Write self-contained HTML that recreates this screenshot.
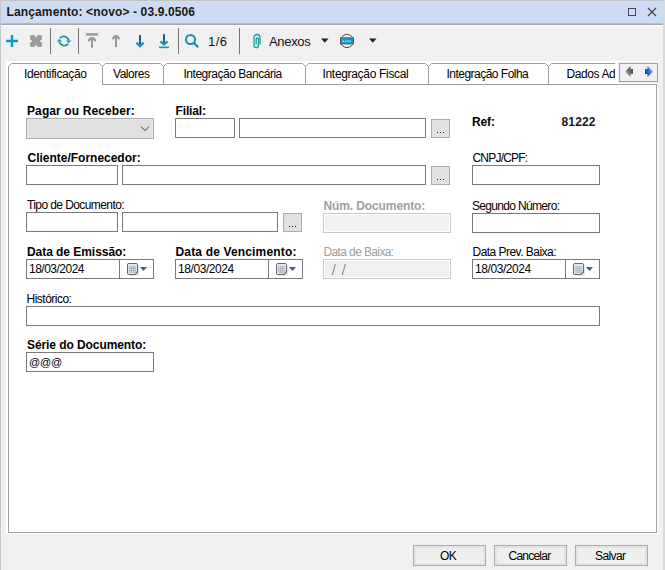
<!DOCTYPE html>
<html><head><meta charset="utf-8">
<style>
*{margin:0;padding:0;box-sizing:border-box}
html,body{width:665px;height:570px;overflow:hidden;background:#f0f0f0;font-family:"Liberation Sans",sans-serif;color:#000}
.a{position:absolute}
.t{position:absolute;white-space:nowrap;font-size:12px;line-height:14px}
.in{position:absolute;background:#fff;border:1px solid #7a7a7a;height:20px}
.dis{position:absolute;background:#f0f0f0;border:1px solid #c8c8c8;box-shadow:inset 0 0 0 1px #ffffff;height:20px}
.dots{position:absolute;background:#e1e1e1;border:1px solid #adadad;width:19px;height:19px}
.dots i{position:absolute;width:1px;height:1px;background:#222;top:12px}
.sep{position:absolute;top:28px;width:1px;height:26px;background:#757575}
.btn{position:absolute;top:545px;width:73px;height:21px;border:1px solid #adadad;background:#efefef;box-shadow:inset 0 0 0 2px #e3e3e3}
.dv{position:absolute;top:260px;width:1px;height:18px;background:#7a7a7a}
</style></head><body>
<!-- window frame -->
<div class="a" style="left:0;top:0;width:665px;height:1px;background:#c4c4c4"></div>
<div class="a" style="left:0;top:0;width:1px;height:570px;background:#c4c4c4"></div>
<div class="a" style="left:663px;top:0;width:2px;height:570px;background:#d9d9d9"></div>
<!-- title bar -->
<div class="a" style="left:1px;top:1px;width:662px;height:22px;background:#cddcf3"></div>
<div class="a" style="left:1px;top:23px;width:662px;height:1px;background:#b9b9b9"></div>
<div class="a" style="left:1px;top:24px;width:662px;height:1px;background:#a6a6a6"></div>
<div class="a" style="left:1px;top:25px;width:662px;height:1px;background:#ffffff"></div>
<div class="a" style="left:628px;top:8px;width:8px;height:8px;border:1px solid #4a4a4a"></div>
<svg class="a" style="left:646px;top:6px" width="12" height="12"><path d="M2 2L10 10M10 2L2 10" stroke="#444" stroke-width="1.2"/></svg>

<!-- toolbar -->
<svg class="a" style="left:0;top:26px" width="400" height="30">
 <path d="M6 15H18M12 9V21" stroke="#1193cf" stroke-width="2.4"/>
 <path d="M31 9H34L36 11.2L38 9H41L42 10V13L39.8 15L42 17V20L41 21H38L36 18.8L34 21H31L30 20V17L32.2 15L30 13V10Z" fill="#9c9c9c"/>
 <g fill="none" stroke="#1a9a9e" stroke-width="1.8">
  <path d="M59.8 12.2A5.2 5.2 0 0 1 68.8 14.6"/>
  <path d="M68.2 17.9A5.2 5.2 0 0 1 59.2 15.4"/>
 </g>
 <path d="M65.9 13.9L68.7 17.2L71.5 13.9L68.7 15.1Z" fill="#1a8cc8"/>
 <path d="M56.5 16.1L59.3 12.8L62.1 16.1L59.3 14.9Z" fill="#1a8cc8"/>
 <g fill="#9a9a9a">
  <rect x="86" y="7.2" width="12" height="2.4"/>
  <path d="M88 15.6V13.6L90.6 11H93.4L96 13.6V15.6H94.6L93 14V21.8H91V14L89.4 15.6Z"/>
  <path d="M112.2 13.6V11.6L114.8 9H117.2L119.8 11.6V13.6H118.4L117 12.2V21H115V12.2L113.6 13.6Z"/>
 </g>
 <rect x="139" y="9" width="2" height="11" fill="#1f5a9e"/>
 <path d="M136.4 16.6L140 20.2L143.6 16.6" fill="none" stroke="#1a8ec8" stroke-width="2.2"/>
 <rect x="163" y="8.2" width="2" height="10" fill="#1f5a9e"/>
 <path d="M160.4 15.4L164 18.6L167.6 15.4" fill="none" stroke="#1a9a9e" stroke-width="2.2"/>
 <rect x="159" y="20.6" width="10" height="1.6" fill="#1a9a9e"/>
 <circle cx="190.5" cy="13.5" r="4.5" fill="none" stroke="#1a8cb0" stroke-width="2"/>
 <path d="M194 17L198.2 21.2" stroke="#1a8cb0" stroke-width="2.2"/>
 <path d="M260 18.5V11.5A3 3 0 0 0 254 11.5V19.5A2.2 2.2 0 0 0 258.4 19.5V13A1.1 1.1 0 0 0 256.2 13V18.5" fill="none" stroke="#1f9a9a" stroke-width="1.3"/>
 <path d="M321 12.6H328.6L324.8 16.8Z" fill="#222"/>
 <path d="M369 12.6H376.6L372.8 16.8Z" fill="#222"/>
 <circle cx="347" cy="15" r="6.6" fill="#f4f4f4" stroke="#4a4a4a" stroke-width="1"/>
 <rect x="340.6" y="11.8" width="12.8" height="6.2" fill="#1a96d4" stroke="#5a4a40" stroke-width="0.8"/>
 <path d="M342.5 15.2H351.5" stroke="#e8f6ff" stroke-width="1" stroke-dasharray="1.5 0.8"/>
</svg>
<div class="sep" style="left:50px"></div>
<div class="sep" style="left:78px"></div>
<div class="sep" style="left:178px"></div>
<div class="sep" style="left:239px"></div>

<!-- tab control -->
<div class="a" style="left:6px;top:61px;width:652px;height:473px;background:#fff"></div>
<div class="a" style="left:8px;top:84px;width:649px;height:449px;border:1px solid #a0a0a0;border-top:none"></div>
<svg class="a" style="left:0;top:55px" width="665" height="35">
 <g fill="none" stroke="#a0a0a0" stroke-width="1">
 <path d="M8.5 35V11.5L11.5 8.5H99.5L102.5 11.5L105.5 8.5H160.5L163.5 11.5L166.5 8.5H302.5L305.5 11.5L308.5 8.5H425.5L428.5 11.5L431.5 8.5H545.5L548.5 11.5L551.5 8.5H615"/>
 <path d="M102.5 11.5V29.5M163.5 11.5V29.5M305.5 11.5V29.5M428.5 11.5V29.5M548.5 11.5V29.5"/>
 <path d="M102 29.5H657"/>
 </g>
</svg>
<div class="a" style="left:549px;top:64px;width:66px;height:20px;overflow:hidden"><div class="t" style="left:17.5px;top:3px;letter-spacing:-0.4px">Dados Adicionais</div></div>
<div class="a" style="left:618px;top:62px;width:40px;height:21px;background:#f0f0f0"></div>
<div class="a" style="left:619px;top:63px;width:39px;height:19px;border:1px solid #a0a0a0;background:#f0f0f0"></div>
<svg class="a" style="left:619px;top:63px" width="39" height="19">
 <defs>
  <linearGradient id="gg" x1="1" y1="0.2" x2="0" y2="0.8"><stop offset="0" stop-color="#4a4a4a"/><stop offset="0.5" stop-color="#6e6e6e"/><stop offset="1" stop-color="#c8c8c8"/></linearGradient>
  <linearGradient id="bg" x1="0" y1="0.8" x2="1" y2="0.2"><stop offset="0" stop-color="#0a30d0"/><stop offset="0.5" stop-color="#2a6af0"/><stop offset="1" stop-color="#a8ccff"/></linearGradient>
 </defs>
 <path d="M6 8.5L11.5 3V6H14V11H11.5V14Z" fill="url(#gg)"/>
 <path d="M34 8.5L28.5 3V6H26V11H28.5V14Z" fill="url(#bg)"/>
</svg>

<!-- form -->
<div class="a" style="left:26px;top:118px;width:128px;height:21px;background:#e1e1e1;border:1px solid #adadad;box-shadow:inset 0 0 0 1px #e6e6e6"></div>
<svg class="a" style="left:140px;top:125px" width="10" height="7"><path d="M1 1.5L5 5.5L9 1.5" fill="none" stroke="#333" stroke-width="1"/></svg>

<div class="in" style="left:175px;top:118px;width:60px"></div>
<div class="in" style="left:239px;top:118px;width:187px"></div>
<div class="dots" style="left:431px;top:119px"><i style="left:5px"></i><i style="left:8px"></i><i style="left:11px"></i></div>

<div class="in" style="left:26px;top:165px;width:92px"></div>
<div class="in" style="left:122px;top:165px;width:304px"></div>
<div class="dots" style="left:431px;top:166px"><i style="left:5px"></i><i style="left:8px"></i><i style="left:11px"></i></div>
<div class="in" style="left:472px;top:165px;width:128px"></div>

<div class="in" style="left:26px;top:212px;width:92px"></div>
<div class="in" style="left:122px;top:212px;width:156px"></div>
<div class="dots" style="left:283px;top:213px"><i style="left:5px"></i><i style="left:8px"></i><i style="left:11px"></i></div>
<div class="dis" style="left:323px;top:213px;width:128px"></div>
<div class="in" style="left:472px;top:213px;width:128px"></div>

<div class="in" style="left:26px;top:259px;width:128px"></div>
<div class="in" style="left:175px;top:259px;width:128px"></div>
<div class="dis" style="left:323px;top:259px;width:128px"></div>
<div class="in" style="left:472px;top:259px;width:128px"></div>
<div class="dv" style="left:119px"></div>
<div class="dv" style="left:268px"></div>
<div class="dv" style="left:565px"></div>
<svg class="a" style="left:0;top:255px" width="665" height="30">
 
 <g transform="translate(127,8)">
   <rect x="1.8" y="1.8" width="10" height="11" rx="1" fill="#bdbdbd" opacity="0.45"/>
   <path d="M1.7 0.5H9.3Q10.5 0.5 10.5 1.7V9.2L8.2 11.5H1.7Q0.5 11.5 0.5 10.3V1.7Q0.5 0.5 1.7 0.5Z" fill="#e2e7ee" stroke="#6e625c" stroke-width="1"/>
   <path d="M8.2 11.5V9.2H10.5Z" fill="#c9ced6" stroke="#6e625c" stroke-width="0.8"/>
   <rect x="2" y="3" width="7" height="7" fill="#9ea9b8"/>
   <g fill="#f4f7fb">
    <rect x="2.4" y="3.4" width="1.4" height="1.4"/><rect x="4.8" y="3.4" width="1.4" height="1.4"/><rect x="7.2" y="3.4" width="1.4" height="1.4"/>
    <rect x="2.4" y="5.8" width="1.4" height="1.4"/><rect x="4.8" y="5.8" width="1.4" height="1.4"/><rect x="7.2" y="5.8" width="1.4" height="1.4"/>
    <rect x="2.4" y="8.2" width="1.4" height="1.4"/><rect x="4.8" y="8.2" width="1.4" height="1.4"/><rect x="7.2" y="8.2" width="1.4" height="1.4"/>
   </g>
   <path d="M13 4H20L16.5 8Z" fill="#3d5b8c"/>
  </g>
 <g transform="translate(276,8)">
   <rect x="1.8" y="1.8" width="10" height="11" rx="1" fill="#bdbdbd" opacity="0.45"/>
   <path d="M1.7 0.5H9.3Q10.5 0.5 10.5 1.7V9.2L8.2 11.5H1.7Q0.5 11.5 0.5 10.3V1.7Q0.5 0.5 1.7 0.5Z" fill="#e2e7ee" stroke="#6e625c" stroke-width="1"/>
   <path d="M8.2 11.5V9.2H10.5Z" fill="#c9ced6" stroke="#6e625c" stroke-width="0.8"/>
   <rect x="2" y="3" width="7" height="7" fill="#9ea9b8"/>
   <g fill="#f4f7fb">
    <rect x="2.4" y="3.4" width="1.4" height="1.4"/><rect x="4.8" y="3.4" width="1.4" height="1.4"/><rect x="7.2" y="3.4" width="1.4" height="1.4"/>
    <rect x="2.4" y="5.8" width="1.4" height="1.4"/><rect x="4.8" y="5.8" width="1.4" height="1.4"/><rect x="7.2" y="5.8" width="1.4" height="1.4"/>
    <rect x="2.4" y="8.2" width="1.4" height="1.4"/><rect x="4.8" y="8.2" width="1.4" height="1.4"/><rect x="7.2" y="8.2" width="1.4" height="1.4"/>
   </g>
   <path d="M13 4H20L16.5 8Z" fill="#3d5b8c"/>
  </g>
 <g transform="translate(573,8)">
   <rect x="1.8" y="1.8" width="10" height="11" rx="1" fill="#bdbdbd" opacity="0.45"/>
   <path d="M1.7 0.5H9.3Q10.5 0.5 10.5 1.7V9.2L8.2 11.5H1.7Q0.5 11.5 0.5 10.3V1.7Q0.5 0.5 1.7 0.5Z" fill="#e2e7ee" stroke="#6e625c" stroke-width="1"/>
   <path d="M8.2 11.5V9.2H10.5Z" fill="#c9ced6" stroke="#6e625c" stroke-width="0.8"/>
   <rect x="2" y="3" width="7" height="7" fill="#9ea9b8"/>
   <g fill="#f4f7fb">
    <rect x="2.4" y="3.4" width="1.4" height="1.4"/><rect x="4.8" y="3.4" width="1.4" height="1.4"/><rect x="7.2" y="3.4" width="1.4" height="1.4"/>
    <rect x="2.4" y="5.8" width="1.4" height="1.4"/><rect x="4.8" y="5.8" width="1.4" height="1.4"/><rect x="7.2" y="5.8" width="1.4" height="1.4"/>
    <rect x="2.4" y="8.2" width="1.4" height="1.4"/><rect x="4.8" y="8.2" width="1.4" height="1.4"/><rect x="7.2" y="8.2" width="1.4" height="1.4"/>
   </g>
   <path d="M13 4H20L16.5 8Z" fill="#3d5b8c"/>
  </g>
 <path d="M332.3 20L335.3 9.2M342.3 20L345.3 9.2" stroke="#8a8a8a" stroke-width="1.1"/>
</svg>

<div class="in" style="left:26px;top:306px;width:574px"></div>
<div class="in" style="left:26px;top:352px;width:128px"></div>

<!-- buttons -->
<div class="btn" style="left:413px"></div>
<div class="btn" style="left:494px"></div>
<div class="btn" style="left:575px"></div>
<div class="t" style="left:6.5px;top:5px;font-weight:bold;letter-spacing:0.13px;color:#1a1a1a;">Lançamento: &lt;novo&gt; - 03.9.0506</div>
<div class="t" style="left:208.0px;top:35px;font-size:13px;letter-spacing:0.5px;color:#111;">1/6</div>
<div class="t" style="left:269.0px;top:35px;font-size:13px;letter-spacing:-0.32px;color:#111;">Anexos</div>
<div class="t" style="left:24.0px;top:67px;letter-spacing:-0.37px;">Identificação</div>
<div class="t" style="left:113.0px;top:67px;letter-spacing:-0.47px;">Valores</div>
<div class="t" style="left:183.5px;top:67px;letter-spacing:-0.48px;">Integração Bancária</div>
<div class="t" style="left:322.5px;top:67px;letter-spacing:-0.32px;">Integração Fiscal</div>
<div class="t" style="left:446.5px;top:67px;letter-spacing:-0.52px;">Integração Folha</div>
<div class="t" style="left:27.0px;top:104px;font-weight:bold;letter-spacing:0.11px;">Pagar ou Receber:</div>
<div class="t" style="left:175.5px;top:104px;font-weight:bold;letter-spacing:-0.13px;">Filial:</div>
<div class="t" style="left:472.0px;top:115px;font-weight:bold;letter-spacing:-0.13px;">Ref:</div>
<div class="t" style="left:561.5px;top:115px;font-weight:bold;letter-spacing:0.15px;color:#1a1a1a;">81222</div>
<div class="t" style="left:27.5px;top:151px;font-weight:bold;letter-spacing:-0.01px;">Cliente/Fornecedor:</div>
<div class="t" style="left:472.5px;top:151px;letter-spacing:-0.8px;">CNPJ/CPF:</div>
<div class="t" style="left:27.0px;top:198px;letter-spacing:-0.59px;">Tipo de Documento:</div>
<div class="t" style="left:323.5px;top:199px;font-weight:bold;letter-spacing:-0.11px;color:#a0a0a0;">Núm. Documento:</div>
<div class="t" style="left:472.0px;top:199px;letter-spacing:-0.67px;">Segundo Número:</div>
<div class="t" style="left:27.0px;top:245px;font-weight:bold;letter-spacing:-0.05px;">Data de Emissão:</div>
<div class="t" style="left:175.5px;top:245px;font-weight:bold;letter-spacing:0.16px;">Data de Vencimento:</div>
<div class="t" style="left:323.5px;top:245px;letter-spacing:-0.62px;color:#a0a0a0;">Data de Baixa:</div>
<div class="t" style="left:472.5px;top:245px;letter-spacing:-0.53px;">Data Prev. Baixa:</div>
<div class="t" style="left:29.0px;top:262px;letter-spacing:-0.51px;">18/03/2024</div>
<div class="t" style="left:178.0px;top:262px;letter-spacing:-0.42px;">18/03/2024</div>
<div class="t" style="left:475.0px;top:262px;letter-spacing:-0.42px;">18/03/2024</div>
<div class="t" style="left:26.5px;top:292px;letter-spacing:-0.51px;">Histórico:</div>
<div class="t" style="left:27.0px;top:338px;font-weight:bold;letter-spacing:-0.08px;">Série do Documento:</div>
<div class="t" style="left:29.0px;top:355px;font-size:11px;letter-spacing:-0.2px;">@@@</div>
<div class="t" style="left:440.0px;top:549px;letter-spacing:-0.6px;">OK</div>
<div class="t" style="left:508.5px;top:549px;letter-spacing:-0.77px;">Cancelar</div>
<div class="t" style="left:595.0px;top:549px;letter-spacing:-0.6px;">Salvar</div>
</body></html>
